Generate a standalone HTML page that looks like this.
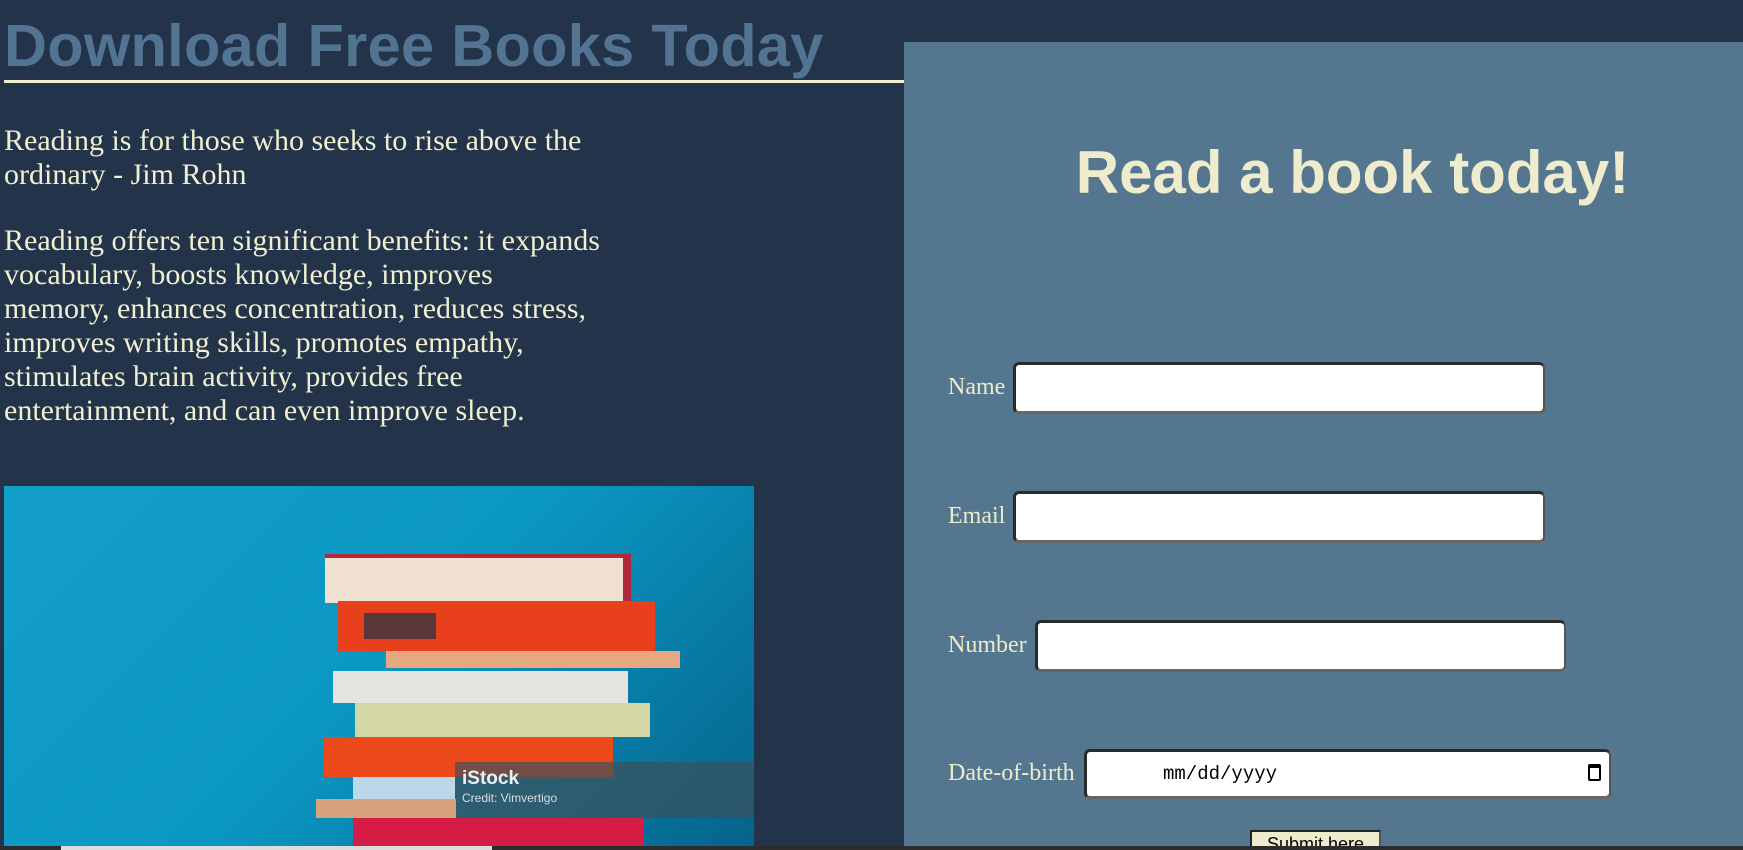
<!DOCTYPE html>
<html><head><meta charset="utf-8"><style>
*{margin:0;padding:0;box-sizing:border-box}
html,body{width:1743px;height:850px;overflow:hidden;background:#22334a;position:relative}
.a{position:absolute}
h1{position:absolute;left:4px;top:11px;font:bold 59.5px "Liberation Sans",sans-serif;color:#527391;white-space:nowrap;letter-spacing:0.3px}
.hr{left:4px;top:80px;width:900px;height:3px;background:#f0efd0}
.p{left:4px;width:603px;font:30px/34px "Liberation Serif",serif;color:#f0efd0}
.panel{left:904px;top:42px;width:839px;height:808px;background:#54768f}
.ttl{left:933px;width:839px;text-align:center;top:138px;font:bold 60px "Liberation Sans",sans-serif;color:#eeeccc}
.lbl{font:24px "Liberation Serif",serif;color:#eeeccc}
.in{background:#fff;border:3px solid #2a2a2a;border-right-color:#555;border-bottom-color:#666;border-right-width:2px;border-bottom-width:3px;border-radius:6px}
.bk{position:absolute}
</style></head><body>
<h1>Download Free Books Today</h1>
<div class="a hr"></div>
<div class="a p" style="top:124px">Reading is for those who seeks to rise above the ordinary - Jim Rohn</div>
<div class="a p" style="top:224px">Reading offers ten significant benefits: it expands vocabulary, boosts knowledge, improves<br>memory, enhances concentration, reduces stress, improves writing skills, promotes empathy, stimulates brain activity, provides free entertainment, and can even improve sleep.</div>
<div class="a" style="left:4px;top:486px;width:750px;height:364px;background:linear-gradient(135deg,#149fc8 0%,#0a97c2 50%,#05638a 100%);overflow:hidden">
<div class="bk" style="left:321px;top:68px;width:306px;height:49px;background:#efe0d0;border-top:4px solid #b0283a;border-right:8px solid #b0283a"></div>
<div class="bk" style="left:334px;top:115px;width:317px;height:50px;background:#e8401c"><div class="bk" style="left:26px;top:12px;width:72px;height:26px;background:#5a3838"></div></div>
<div class="bk" style="left:382px;top:165px;width:294px;height:17px;background:#e5a880"></div>
<div class="bk" style="left:329px;top:185px;width:295px;height:32px;background:#e6e4e0"></div>
<div class="bk" style="left:351px;top:217px;width:295px;height:34px;background:#d3d7a5"></div>
<div class="bk" style="left:320px;top:251px;width:289px;height:40px;background:#ec4a1a"></div>
<div class="bk" style="left:349px;top:291px;width:102px;height:22px;background:#bcd6ea"></div>
<div class="bk" style="left:451px;top:276px;width:299px;height:56px;background:rgba(60,80,90,0.7)"></div>
<div class="bk" style="left:458px;top:282px;font:bold 19px 'Liberation Sans',sans-serif;color:#eee">iStock</div>
<div class="bk" style="left:458px;top:305px;font:12px 'Liberation Sans',sans-serif;color:#ddd">Credit: Vimvertigo</div>
<div class="bk" style="left:312px;top:313px;width:140px;height:19px;background:#d8a37c"></div>
<div class="bk" style="left:349px;top:332px;width:291px;height:32px;background:#d41c44"></div>
</div>
<div class="a panel"></div>
<div class="a ttl">Read a book today!</div>
<div class="a lbl" style="left:948px;top:374px">Name</div>
<div class="a in" style="left:1013px;top:362px;width:532px;height:52px"></div>
<div class="a lbl" style="left:948px;top:503px">Email</div>
<div class="a in" style="left:1013px;top:491px;width:532px;height:52px"></div>
<div class="a lbl" style="left:948px;top:632px">Number</div>
<div class="a in" style="left:1035px;top:620px;width:531px;height:52px"></div>
<div class="a lbl" style="left:948px;top:760px">Date-of-birth</div>
<div class="a in" style="left:1084px;top:749px;width:527px;height:50px"><span class="a" style="left:76px;top:11px;font:19px 'Liberation Mono',monospace;color:#000">mm/dd/yyyy</span><span class="a" style="right:8px;top:12px;width:13px;height:17px;border:2px solid #000;border-top-width:4px;border-radius:2px"></span></div>
<div class="a" style="left:1250px;top:830px;width:131px;height:24px;background:#eeeccc;border:2px solid #222;border-right-color:#555;font:18px 'Liberation Sans',sans-serif;text-align:center;padding-top:2px;color:#000">Submit here</div>
<div class="a" style="left:0;top:846px;width:1743px;height:4px;background:#2c2c2c"></div>
<div class="a" style="left:61px;top:846px;width:431px;height:4px;background:#ddd"></div>
</body></html>
